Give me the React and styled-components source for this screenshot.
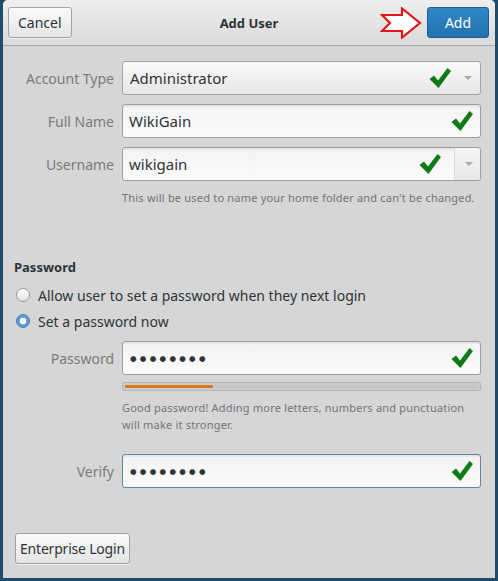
import styled, { createGlobalStyle } from "styled-components";

const GlobalStyle = createGlobalStyle`
  html, body {
    margin: 0;
    padding: 0;
    background: #1f4b6c;
  }
  body {
    font-family: "Noto Sans", "DejaVu Sans", sans-serif;
    font-size: 14px;
    color: #2e3436;
  }
`;

function Check() {
  return (
    <CheckIcon viewBox="0 0 24 24">
      <path
        d="M1.5 13 L6 9.5 L10 14.5 L19.5 2 L23 5 L10.5 22 Z"
        fill="#107a16"
      />
    </CheckIcon>
  );
}

function RedArrow() {
  return (
    <ArrowIcon viewBox="0 0 42 32">
      <path
        d="M2 8 L22 8 L22 1.5 L40 16 L22 30.5 L22 24 L2 24 L10 16 Z"
        fill="#fff"
        stroke="#e0161b"
        strokeWidth="2.2"
        strokeLinejoin="miter"
      />
    </ArrowIcon>
  );
}

export default function App() {
  return (
    <>
      <GlobalStyle />
      <Window>
        <TitleBar>
          <Button>Cancel</Button>
          <Title>Add User</Title>
          <RightSide>
            <RedArrow />
            <AddButton>Add</AddButton>
          </RightSide>
        </TitleBar>
        <Body>
          <FormGrid>
            <Label>Account Type</Label>
            <Combo>
              <ComboText>Administrator</ComboText>
              <Check />
              <DropArrow />
            </Combo>
            <Label>Full Name</Label>
            <Entry>
              <EntryText>WikiGain</EntryText>
              <Check />
            </Entry>
            <Label>Username</Label>
            <Entry $combo>
              <EntryText>wikigain</EntryText>
              <Check />
              <ComboButton>
                <DropArrow />
              </ComboButton>
            </Entry>
            <span />
            <Hint>This will be used to name your home folder and can't be changed.</Hint>
          </FormGrid>

          <SectionTitle>Password</SectionTitle>
          <RadioRow>
            <Radio />
            Allow user to set a password when they next login
          </RadioRow>
          <RadioRow>
            <Radio $checked />
            Set a password now
          </RadioRow>

          <PasswordGrid>
            <Label>Password</Label>
            <Entry>
              <Dots>●●●●●●●●</Dots>
              <Check />
            </Entry>
            <span />
            <Strength>
              <Segment $filled />
              <Segment />
              <Segment />
              <Segment />
            </Strength>
            <span />
            <Hint $lines>
              Good password! Adding more letters, numbers and punctuation
              <br />
              will make it stronger.
            </Hint>
            <Label $verify>Verify</Label>
            <Entry $focused $verify>
              <Dots>●●●●●●●●</Dots>
              <Check />
            </Entry>
          </PasswordGrid>

          <Footer>
            <Button $wide>Enterprise Login</Button>
          </Footer>
        </Body>
      </Window>
    </>
  );
}

const Window = styled.div`
  margin: 0 3px;
  height: 578px;
  background: #d6d6d6;
  border-radius: 5px 5px 0 0;
  display: flex;
  flex-direction: column;
  overflow: hidden;
`;

const TitleBar = styled.div`
  height: 45px;
  border-bottom: 1px solid #a9a9a9;
  background: linear-gradient(#eeeeee, #dadada);
  display: flex;
  align-items: center;
  justify-content: space-between;
  padding: 0 6px 0 5px;
  position: relative;
`;

const Title = styled.div`
  position: absolute;
  left: 0;
  right: 0;
  text-align: center;
  font-weight: bold;
  font-size: 13px;
  color: #2e3436;
  pointer-events: none;
`;

const RightSide = styled.div`
  display: flex;
  align-items: center;
  gap: 5px;
`;

const Button = styled.button`
  height: 31px;
  padding: 0 ${({ $wide }) => ($wide ? "4px" : "9px")};
  font-family: "Noto Sans", "DejaVu Sans", sans-serif;
  font-size: 14px;
  letter-spacing: ${({ $wide }) => ($wide ? "-0.2px" : "0")};
  color: #2e3436;
  background: linear-gradient(#fbfbfb, #e4e4e4);
  border: 1px solid #a1a1a1;
  border-radius: 3px;
  box-shadow: 0 1px 0 rgba(255, 255, 255, 0.6);
`;

const AddButton = styled.button`
  width: 62px;
  height: 31px;
  font-family: "Noto Sans", "DejaVu Sans", sans-serif;
  font-size: 14px;
  color: #ffffff;
  background: linear-gradient(#3288c8, #2272ae);
  border: 1px solid #1d5f94;
  border-radius: 3px;
`;

const ArrowIcon = styled.svg`
  width: 42px;
  height: 32px;
`;

const Body = styled.div`
  flex: 1;
  display: flex;
  flex-direction: column;
  padding: 15px 14px 0 11px;
`;

const FormGrid = styled.div`
  display: grid;
  grid-template-columns: 100px 1fr;
  column-gap: 8px;
  row-gap: 9px;
  align-items: center;
`;

const PasswordGrid = styled(FormGrid)`
  row-gap: 0;
  margin-top: 7px;
`;

const Label = styled.div`
  text-align: right;
  color: #7b7b7b;
  font-size: 14px;
  margin-top: ${({ $verify }) => ($verify ? "21px" : "0")};
`;

const fieldBase = `
  height: 34px;
  box-sizing: border-box;
  border-radius: 3px;
  display: flex;
  align-items: center;
  padding-left: 6px;
  font-size: 15px;
  color: #2e3436;
`;

const Combo = styled.div`
  ${fieldBase}
  padding-left: 7px;
  border: 1px solid #a3a3a3;
  background: linear-gradient(#fafafa, #e6e6e6);
  padding-right: 8px;
`;

const Entry = styled.div`
  ${fieldBase}
  border: 1px solid ${({ $focused }) => ($focused ? "#5d85a8" : "#9e9e9e")};
  background: linear-gradient(#f3f3f3, #fbfbfb);
  box-shadow: inset 0 2px 1px rgba(0, 0, 0, 0.06);
  padding-right: ${({ $combo }) => ($combo ? "0" : "4px")};
  margin-top: ${({ $verify }) => ($verify ? "21px" : "0")};
`;

const ComboText = styled.span`
  flex: 1;
`;

const EntryText = styled.span`
  flex: 1;
`;

const Dots = styled.span`
  flex: 1;
  font-size: 7.5px;
  letter-spacing: 3.3px;
  padding-left: 1px;
  color: #2e3436;
`;

const CheckIcon = styled.svg`
  width: 24px;
  height: 24px;
  margin-right: 2px;
`;

const DropArrow = styled.span`
  width: 0;
  height: 0;
  margin-left: 10px;
  border-left: 4px solid transparent;
  border-right: 4px solid transparent;
  border-top: 4px solid #a8a8a8;
`;

const ComboButton = styled.div`
  height: 100%;
  width: 25px;
  border-left: 1px solid #dadada;
  margin-left: 10px;
  display: flex;
  align-items: center;
  background: linear-gradient(#f6f6f6, #e8e8e8);
  border-radius: 0 3px 3px 0;
`;

const Hint = styled.div`
  font-size: 11px;
  letter-spacing: 0.2px;
  color: #747474;
  line-height: ${({ $lines }) => ($lines ? "17px" : "14px")};
  margin-top: ${({ $lines }) => ($lines ? "8px" : "1px")};
  white-space: nowrap;
`;

const SectionTitle = styled.div`
  font-weight: bold;
  font-size: 13px;
  margin-top: 53px;
  margin-bottom: 6px;
  margin-left: 0;
  color: #2e3436;
`;

const RadioRow = styled.label`
  display: flex;
  align-items: center;
  gap: 8px;
  height: 26px;
  margin-left: 2px;
  font-size: 14px;
  color: #2e3436;
`;

const Radio = styled.span`
  width: 12px;
  height: 12px;
  border-radius: 50%;
  border: 1px solid ${({ $checked }) => ($checked ? "#4a7fb5" : "#9a9a9a")};
  background: ${({ $checked }) =>
    $checked
      ? "radial-gradient(circle, #ffffff 0 3px, #6aa7df 3.5px, #3f84c7 100%)"
      : "linear-gradient(#ffffff, #e2e2e2)"};
`;

const Strength = styled.div`
  height: 9px;
  margin-top: 7px;
  border: 1px solid #b5b5b5;
  border-radius: 2px;
  background: #cbcbcb;
  display: flex;
  box-sizing: border-box;
  padding: 2px;
  gap: 1px;
`;

const Segment = styled.div`
  flex: 1;
  border-radius: 1px;
  background: ${({ $filled }) => ($filled ? "#d7791e" : "#c4c4c4")};
`;

const Footer = styled.div`
  margin-top: auto;
  padding: 0 0 14px 1px;
`;
